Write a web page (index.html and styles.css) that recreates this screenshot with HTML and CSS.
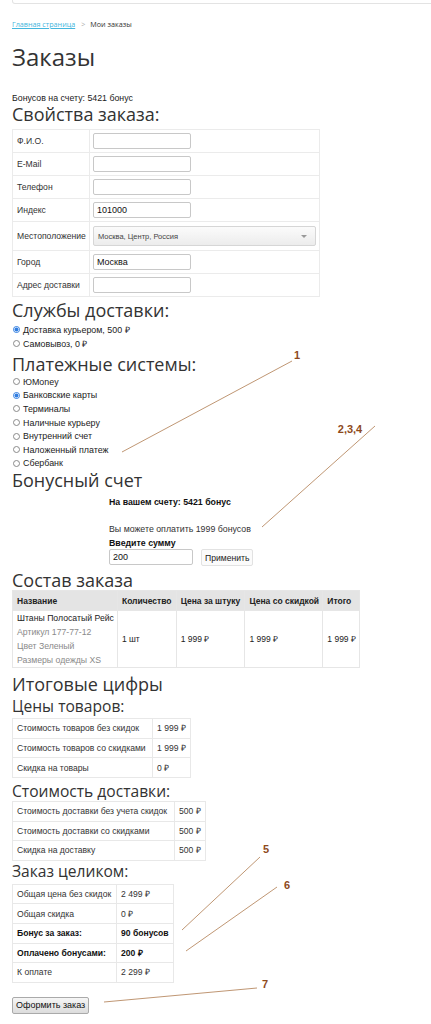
FILE: index.html
```html
<!DOCTYPE html>
<html lang="ru">
<head>
<meta charset="utf-8">
<title>Заказы</title>
<link rel="stylesheet" href="styles.css">
</head>
<body>
<div class="page">
  <div class="topbar"></div>
  <div class="crumbs"><a href="#">Главная страница</a><span class="sep">&gt;</span><span>Мои заказы</span></div>
  <h1>Заказы</h1>
  <div class="bonus-line">Бонусов на счету: 5421 бонус</div>
  <h2>Свойства заказа:</h2>
  <table class="props">
    <tr><td class="label">Ф.И.О.</td><td><input type="text"></td></tr>
    <tr><td class="label">E-Mail</td><td><input type="text"></td></tr>
    <tr><td class="label">Телефон</td><td><input type="text"></td></tr>
    <tr><td class="label">Индекс</td><td><input type="text" value="101000"></td></tr>
    <tr class="loc"><td class="label">Местоположение</td><td><div class="select"><span>Москва, Центр, Россия</span><span class="arrow"></span></div></td></tr>
    <tr><td class="label">Город</td><td><input type="text" value="Москва"></td></tr>
    <tr><td class="label">Адрес доставки</td><td><input type="text"></td></tr>
  </table>

  <h2 class="h-del">Службы доставки:</h2>
  <div class="radios del">
    <div class="ritem"><span class="radio on"></span>Доставка курьером, 500 ₽</div>
    <div class="ritem"><span class="radio"></span>Самовывоз, 0 ₽</div>
  </div>

  <h2 class="h-pay">Платежные системы:</h2>
  <div class="radios pay">
    <div class="ritem"><span class="radio"></span>ЮMoney</div>
    <div class="ritem"><span class="radio on"></span>Банковские карты</div>
    <div class="ritem"><span class="radio"></span>Терминалы</div>
    <div class="ritem"><span class="radio"></span>Наличные курьеру</div>
    <div class="ritem"><span class="radio"></span>Внутренний счет</div>
    <div class="ritem"><span class="radio"></span>Наложенный платеж</div>
    <div class="ritem"><span class="radio"></span>Сбербанк</div>
  </div>

  <h2>Бонусный счет</h2>
  <div class="bonus">
    <div class="b-strong">На вашем счету: 5421 бонус</div>
    <div class="b-blank"></div>
    <div>Вы можете оплатить 1999 бонусов</div>
    <div class="b-strong">Введите сумму</div>
    <div class="b-form"><input type="text" value="200" class="b-input"><button class="b-apply">Применить</button></div>
  </div>

  <h2 class="h-comp">Состав заказа</h2>
  <table class="items">
    <tr class="head">
      <th class="c1">Название</th><th class="c2">Количество</th><th class="c3">Цена за штуку</th><th class="c4">Цена со скидкой</th><th class="c5">Итого</th>
    </tr>
    <tr>
      <td class="c1"><div>Штаны Полосатый Рейс</div><div class="muted">Артикул 177-77-12</div><div class="muted">Цвет Зеленый</div><div class="muted">Размеры одежды XS</div></td>
      <td>1 шт</td><td>1 999 ₽</td><td>1 999 ₽</td><td>1 999 ₽</td>
    </tr>
  </table>

  <h2 class="h-tot">Итоговые цифры</h2>
  <h3 class="h-goods">Цены товаров:</h3>
  <table class="sum t1">
    <tr><td class="k">Стоимость товаров без скидок</td><td class="v">1 999 ₽</td></tr>
    <tr><td class="k">Стоимость товаров со скидками</td><td class="v">1 999 ₽</td></tr>
    <tr><td class="k">Скидка на товары</td><td class="v">0 ₽</td></tr>
  </table>
  <h3 class="h-ship">Стоимость доставки:</h3>
  <table class="sum t2">
    <tr><td class="k">Стоимость доставки без учета скидок</td><td class="v">500 ₽</td></tr>
    <tr><td class="k">Стоимость доставки со скидками</td><td class="v">500 ₽</td></tr>
    <tr><td class="k">Скидка на доставку</td><td class="v">500 ₽</td></tr>
  </table>
  <h3 class="h-whole">Заказ целиком:</h3>
  <table class="sum t3">
    <tr><td class="k">Общая цена без скидок</td><td class="v">2 499 ₽</td></tr>
    <tr><td class="k">Общая скидка</td><td class="v">0 ₽</td></tr>
    <tr class="bold"><td class="k">Бонус за заказ:</td><td class="v">90 бонусов</td></tr>
    <tr class="bold"><td class="k">Оплачено бонусами:</td><td class="v">200 ₽</td></tr>
    <tr><td class="k">К оплате</td><td class="v">2 299 ₽</td></tr>
  </table>
  <button class="submit">Оформить заказ</button>
</div>

<svg class="notes" width="431" height="1024" viewBox="0 0 431 1024">
  <g stroke="#b88a63" stroke-width="0.9" fill="none">
    <line x1="292" y1="361" x2="122" y2="452"/>
    <line x1="375" y1="426" x2="262" y2="527"/>
    <line x1="260" y1="857" x2="182" y2="930"/>
    <line x1="277" y1="887" x2="186" y2="951"/>
    <line x1="257" y1="988" x2="104" y2="1002"/>
  </g>
  <g class="num" fill="#8e4a1c">
    <text x="297" y="359" text-anchor="middle">1</text>
    <text x="350" y="433" text-anchor="middle">2,3,4</text>
    <text x="266" y="853" text-anchor="middle">5</text>
    <text x="287" y="889" text-anchor="middle">6</text>
    <text x="265" y="988" text-anchor="middle">7</text>
  </g>
</svg>
</body>
</html>
```

FILE: styles.css
```css
body {
  margin: 0;
  font-family: "Liberation Sans", Arial, sans-serif;
  font-size: 8.8px;
  color: #222;
  background: #fff;
  overflow-x: hidden;
  position: relative;
}
.page {
  padding: 0 12px;
}
.topbar {
  height: 3px;
  border: 1px solid #e3e3e3;
  border-top: none;
  border-radius: 0 0 3px 3px;
  margin-right: -30px;
}
.crumbs {
  margin-top: 14px;
  font-family: "Open Sans", sans-serif;
  font-size: 7.2px;
  line-height: 12px;
  color: #333;
}
.crumbs a {
  color: #45b6dd;
  text-decoration: underline;
}
.crumbs .sep {
  color: #aaa;
  margin: 0 5px 0 6px;
}
h1 {
  font-family: "Open Sans", sans-serif;
  font-weight: 400;
  font-size: 24px;
  line-height: 28px;
  margin: 13px 0 21px;
  color: #333;
}
.bonus-line {
  line-height: 12px;
}
h2 {
  font-family: "Open Sans", sans-serif;
  font-weight: 400;
  font-size: 18px;
  line-height: 20px;
  margin: 0;
  color: #333;
}
h3 {
  font-family: "Open Sans", sans-serif;
  font-weight: 400;
  font-size: 15.6px;
  line-height: 18px;
  margin: 0;
  color: #333;
}

/* properties form */
.props {
  border-collapse: collapse;
  margin-top: 5px;
  width: 308px;
}
.props td {
  border: 1px solid #ebebeb;
  padding: 3px;
  height: 16px;
  color: #333;
  font-size: 8.6px;
}
.props tr.loc td {
  height: 22px;
}
.props td.label {
  width: 70px;
  padding-left: 4px;
  white-space: nowrap;
}
.props input {
  display: block;
  width: 98px;
  height: 16px;
  box-sizing: border-box;
  border: 1px solid #c8c8c8;
  border-radius: 2px;
  font: 9px "Liberation Sans", Arial, sans-serif;
  color: #111;
  padding: 0 3px;
  margin: 0;
}
.select {
  height: 20px;
  box-sizing: border-box;
  width: 223px;
  border: 1px solid #d6d6d6;
  border-radius: 2px;
  background: linear-gradient(#fbfbfb, #ececec);
  display: flex;
  align-items: center;
  justify-content: space-between;
  padding: 0 8px 0 4px;
  font-size: 7.5px;
  color: #444;
}
.select .arrow {
  width: 0;
  height: 0;
  border-left: 3px solid transparent;
  border-right: 3px solid transparent;
  border-top: 3px solid #999;
}

/* radios */
.h-del {
  margin-top: 3px;
}
.radios .ritem {
  display: flex;
  align-items: center;
  font-size: 8.9px;
  color: #222;
}
.radios.del {
  margin-top: 3px;
  margin-bottom: 4px;
}
.radios.del .ritem {
  height: 13.5px;
}
.radios.pay {
  margin-top: 1px;
}
.radios.pay .ritem {
  height: 13.6px;
}
.radio {
  width: 7px;
  height: 7px;
  box-sizing: border-box;
  border: 1px solid #8a8a8a;
  border-radius: 50%;
  margin: 0 3px 0 1px;
  flex: none;
}
.radio.on {
  border-color: #2f7de1;
  background: radial-gradient(circle, #2f7de1 0 1.8px, #fff 2.2px);
}

/* bonus */
.bonus {
  padding-left: 97px;
  padding-top: 6px;
  line-height: 13.5px;
  color: #333;
}
.b-strong {
  font-weight: bold;
  color: #111;
}
.b-blank {
  height: 13.5px;
}
.b-form {
  display: flex;
  align-items: flex-start;
  gap: 8px;
  margin-top: -1px;
}
.b-input {
  width: 84px;
  height: 16px;
  box-sizing: border-box;
  border: 1px solid #c8c8c8;
  border-radius: 2px;
  font: 9px "Liberation Sans", Arial, sans-serif;
  padding: 0 3px;
  color: #111;
  margin: 0;
}
.b-apply {
  height: 17px;
  padding: 0 3px;
  margin: 0;
  border: 1px solid #e2e2e2;
  border-radius: 2px;
  background: #fbfbfb;
  font: 8.6px "Liberation Sans", Arial, sans-serif;
  color: #222;
}
.h-comp {
  margin-top: 4px;
}

/* items table */
.items {
  border-collapse: collapse;
  margin-top: 0;
  width: 348px;
}
.items th, .items td {
  border: 1px solid #e6e6e6;
  text-align: left;
  padding: 0 3px 0 4px;
  white-space: nowrap;
}
.items th {
  background: #e4e4e4;
  font-weight: bold;
  height: 19px;
  color: #222;
  font-size: 8.5px;
}
.items td {
  font-size: 8.5px;
  color: #222;
  vertical-align: middle;
  line-height: 14px;
}
.items td.c1 {
  font-size: 8.7px;
}
.items .muted {
  color: #8a8a8a;
}
.items .c1 { width: 95px; }
.items .c2 { width: 51px; }
.items .c3 { width: 61px; }
.items .c4 { width: 70px; }
.items .c5 { width: 28px; }
.h-tot {
  margin-top: 6px;
}
.h-goods {
  margin-top: 3px;
}
.h-ship {
  margin-top: 4px;
}
.h-whole {
  margin-top: 1px;
}

/* summary tables */
.sum {
  border-collapse: collapse;
}
.t1 { margin-top: 3px; }
.t2 { margin-top: 1px; }
.t3 { margin-top: 4px; }
.sum td {
  border: 1px solid #e8e8e8;
  height: 18.6px;
  padding: 0 4px;
  white-space: nowrap;
  color: #333;
  font-size: 8.6px;
}
.t1 .k { width: 131px; }
.t1 .v { width: 27px; }
.t2 .k { width: 153px; }
.t2 .v { width: 20px; }
.t3 .k { width: 95px; }
.t3 .v { width: 47px; }
.sum tr.bold td {
  font-weight: bold;
  color: #111;
}
.submit {
  display: block;
  margin-top: 14px;
  height: 17px;
  padding: 0 3px;
  border: 1px solid #aaa;
  border-radius: 2px;
  background: linear-gradient(#f6f6f6, #dcdcdc);
  font: 9px "Liberation Sans", Arial, sans-serif;
  color: #111;
}

/* annotations */
.notes {
  position: absolute;
  left: 0;
  top: 0;
  pointer-events: none;
}
.num {
  font: bold 11px "Liberation Sans", Arial, sans-serif;
}
```
